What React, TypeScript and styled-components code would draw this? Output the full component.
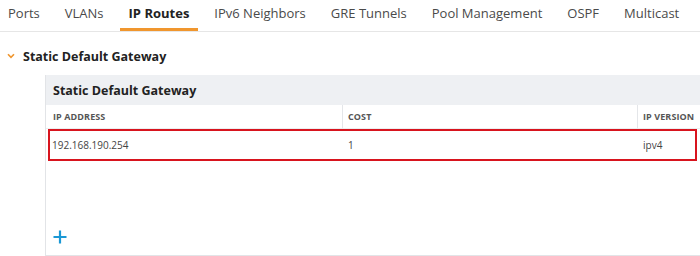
import styled, { createGlobalStyle } from "styled-components";

const GlobalStyle = createGlobalStyle`
  html, body {
    margin: 0;
    padding: 0;
    background: #ffffff;
    overflow: hidden;
  }
  body {
    font-family: "Open Sans", "Liberation Sans", sans-serif;
    color: #333;
  }
`;

const tabs = [
  "Ports",
  "VLANs",
  "IP Routes",
  "IPv6 Neighbors",
  "GRE Tunnels",
  "Pool Management",
  "OSPF",
  "Multicast",
];

const columns = ["IP ADDRESS", "COST", "IP VERSION"];

const routes = [{ address: "192.168.190.254", cost: "1", version: "ipv4" }];

const Page = styled.div`
  width: 700px;
  height: 256px;
  display: flex;
  flex-direction: column;
`;

const TabBar = styled.div`
  display: flex;
  height: 31px;
  border-bottom: 1px solid #e6e6e6;
  margin-left: -1px;
`;

const Tab = styled.div<{ $active?: boolean }>`
  display: flex;
  align-items: center;
  padding: 0 9px 3px;
  margin-right: 7px;
  font-size: 13px;
  font-weight: ${(p) => (p.$active ? 700 : 400)};
  color: ${(p) => (p.$active ? "#222" : "#4a4a4a")};
  border-bottom: 3px solid ${(p) => (p.$active ? "#f0962e" : "transparent")};
  white-space: nowrap;
`;

const SectionHeader = styled.div`
  display: flex;
  align-items: center;
  gap: 8px;
  height: 20px;
  margin-top: 14px;
  padding-left: 7px;
  font-size: 12.5px;
  font-weight: 700;
  color: #222;
`;

const Chevron = styled.svg`
  width: 8px;
  height: 6px;
`;

const Panel = styled.div`
  margin: 9px -20px 0 45px;
  border: 1px solid #e2e4e7;
  border-top: none;
  flex: 1;
  display: flex;
  flex-direction: column;
`;

const PanelTitle = styled.div`
  height: 30px;
  display: flex;
  align-items: center;
  padding-left: 7px;
  background: #eef0f3;
  font-size: 12.5px;
  font-weight: 700;
  color: #222;
`;

const Grid = styled.div`
  display: grid;
  grid-template-columns: 296px 295px 1fr;
`;

const HeadCell = styled.div<{ $divider?: boolean }>`
  height: 23px;
  display: flex;
  align-items: center;
  padding-left: ${(p) => (p.$divider ? 5 : 7)}px;
  border-left: ${(p) => (p.$divider ? "1px solid #e4e6e9" : "none")};
  border-bottom: 1px solid #eceef0;
  font-size: 9px;
  font-weight: 700;
  color: #555;
  letter-spacing: 0.1px;
`;

const Highlight = styled.div`
  margin: 0 22px 0 2px;
  border: 2px solid #d8141e;
`;

const Cell = styled.div<{ $first?: boolean }>`
  height: 28px;
  display: flex;
  align-items: center;
  padding-left: ${(p) => (p.$first ? 2 : 4)}px;
  font-size: 10px;
  color: #444;
`;

const Spacer = styled.div`
  flex: 1;
`;

const AddButton = styled.button`
  width: 22px;
  height: 22px;
  margin: 0 0 7px 3px;
  padding: 0;
  border: none;
  background: transparent;
  display: flex;
  align-items: center;
  justify-content: center;
`;

export default function App() {
  return (
    <Page>
      <GlobalStyle />
      <TabBar>
        {tabs.map((t) => (
          <Tab key={t} $active={t === "IP Routes"}>
            {t}
          </Tab>
        ))}
      </TabBar>
      <SectionHeader>
        <Chevron viewBox="0 0 8 6">
          <path d="M1 1.2 L4 4.4 L7 1.2" fill="none" stroke="#f0962e" strokeWidth="1.6" />
        </Chevron>
        Static Default Gateway
      </SectionHeader>
      <Panel>
        <PanelTitle>Static Default Gateway</PanelTitle>
        <Grid>
          {columns.map((c, i) => (
            <HeadCell key={c} $divider={i > 0}>
              {c}
            </HeadCell>
          ))}
        </Grid>
        {routes.map((r) => (
          <Highlight key={r.address}>
            <Grid style={{ gridTemplateColumns: "294px 295px 1fr" }}>
              <Cell $first>{r.address}</Cell>
              <Cell>{r.cost}</Cell>
              <Cell>{r.version}</Cell>
            </Grid>
          </Highlight>
        ))}
        <Spacer />
        <AddButton aria-label="add">
          <svg width="14" height="14" viewBox="0 0 14 14">
            <path d="M7 0.5 V13.5 M0.5 7 H13.5" stroke="#1b98d5" strokeWidth="2.2" />
          </svg>
        </AddButton>
      </Panel>
    </Page>
  );
}
